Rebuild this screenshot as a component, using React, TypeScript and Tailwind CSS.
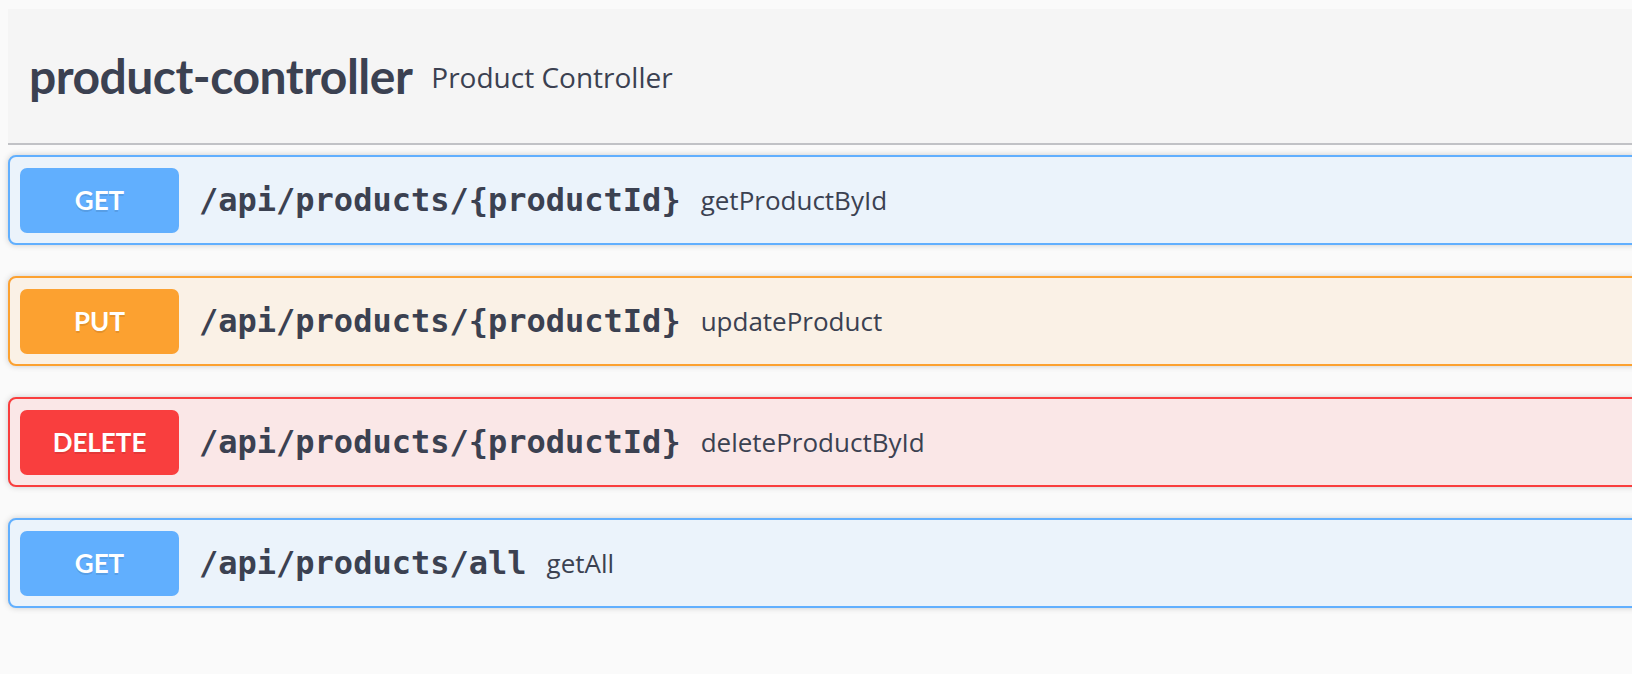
import React from 'react'

type Op = {
  method: 'GET' | 'PUT' | 'DELETE'
  path: string
  summary: string
}

const ops: Op[] = [
  { method: 'GET', path: '/api/products/{productId}', summary: 'getProductById' },
  { method: 'PUT', path: '/api/products/{productId}', summary: 'updateProduct' },
  { method: 'DELETE', path: '/api/products/{productId}', summary: 'deleteProductById' },
  { method: 'GET', path: '/api/products/all', summary: 'getAll' },
]

// full class strings per method so tailwind picks them up
const methodStyles = {
  GET: { block: 'bg-[#ebf3fb] border-[#61affe]', badge: 'bg-[#61affe]' },
  PUT: { block: 'bg-[#faf1e6] border-[#fca130]', badge: 'bg-[#fca130]' },
  DELETE: { block: 'bg-[#fae7e7] border-[#f93e3e]', badge: 'bg-[#f93e3e]' },
}

const OpBlock = ({ op }: { op: Op }) => {
  const s = methodStyles[op.method]
  return (
    <div
      className={`flex items-center h-[90px] border-2 rounded-[8px] p-[10px] mb-[31px] shadow-[0_0_6px_rgba(0,0,0,0.19)] ${s.block}`}
    >
      <span
        className={`flex items-center justify-center w-[159px] h-[65px] rounded-[7px] text-white text-[26px] font-bold font-[Lato,'Open_Sans',sans-serif] [text-shadow:0_2px_0_rgba(0,0,0,0.1)] ${s.badge}`}
      >
        {op.method}
      </span>
      <span className="px-[20px] text-[32px] font-bold text-[#3b4151] font-['DejaVu_Sans_Mono','Liberation_Mono',monospace]">
        {op.path}
      </span>
      <span className="text-[26px] text-[#3b4151] font-['Open_Sans','Noto_Sans',sans-serif]">
        {op.summary}
      </span>
    </div>
  )
}

export default function App() {
  return (
    <div className="w-[1632px] h-[674px] bg-[#fafafa] overflow-hidden">
      <div className="w-[1700px] pl-[8px] pt-[9px]">
        {/* Tag header */}
        <div className="flex items-center h-[136px] bg-[#f5f5f5] border-b-2 border-[#c1c2c6] pl-[21px] mb-[10px]">
          <h4 className="text-[48px] font-bold text-[#3b4151] tracking-[-0.5px] font-[Lato,'Open_Sans',sans-serif]">
            product-controller
          </h4>
          <span className="ml-[19px] mt-[2px] text-[28px] text-[#3b4151] font-['Open_Sans','Noto_Sans',sans-serif]">
            Product Controller
          </span>
        </div>

        {ops.map((op, i) => (
          <OpBlock key={i} op={op} />
        ))}
      </div>
    </div>
  )
}
